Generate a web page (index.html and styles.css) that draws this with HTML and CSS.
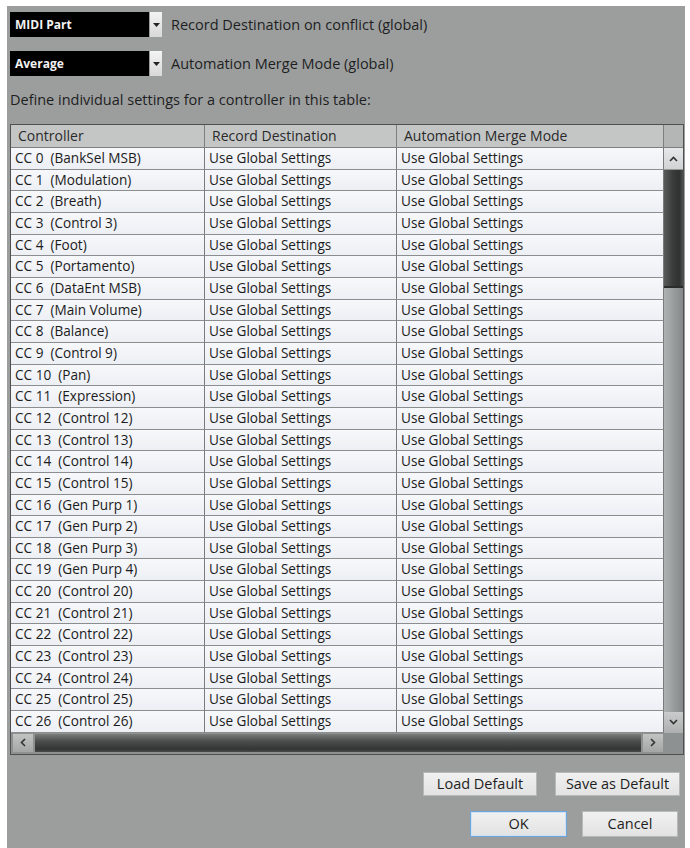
FILE: index.html
```html
<!DOCTYPE html>
<html>
<head>
<meta charset="utf-8">
<link rel="stylesheet" href="styles.css">
</head>
<body>
<div class="dialog">
  <div class="opt-row">
    <div class="combo"><span class="combo-box">MIDI Part</span><span class="combo-btn"><svg width="7" height="4" viewBox="0 0 7 4"><path d="M0 0H7L3.5 4Z" fill="#222"/></svg></span></div>
    <span class="opt-label">Record Destination on conflict (global)</span>
  </div>
  <div class="opt-row">
    <div class="combo"><span class="combo-box">Average</span><span class="combo-btn"><svg width="7" height="4" viewBox="0 0 7 4"><path d="M0 0H7L3.5 4Z" fill="#222"/></svg></span></div>
    <span class="opt-label">Automation Merge Mode (global)</span>
  </div>
  <p class="intro">Define individual settings for a controller in this table:</p>

  <div class="table">
    <div class="hd">Controller</div>
    <div class="hd">Record Destination</div>
    <div class="hd">Automation Merge Mode</div>
    <div class="hd corner"></div>

    <div class="vscroll">
      <div class="sbtn up"><svg width="9" height="6" viewBox="0 0 9 6"><path d="M1 5L4.5 1.5L8 5" fill="none" stroke="#333" stroke-width="1.6"/></svg></div>
      <div class="vthumb"></div>
      <div class="vtrack"></div>
      <div class="sbtn down"><svg width="9" height="6" viewBox="0 0 9 6"><path d="M1 1L4.5 4.5L8 1" fill="none" stroke="#333" stroke-width="1.6"/></svg></div>
    </div>

    <div class="c">CC 0&nbsp; (BankSel MSB)</div><div class="c">Use Global Settings</div><div class="c">Use Global Settings</div>
    <div class="c">CC 1&nbsp; (Modulation)</div><div class="c">Use Global Settings</div><div class="c">Use Global Settings</div>
    <div class="c">CC 2&nbsp; (Breath)</div><div class="c">Use Global Settings</div><div class="c">Use Global Settings</div>
    <div class="c">CC 3&nbsp; (Control 3)</div><div class="c">Use Global Settings</div><div class="c">Use Global Settings</div>
    <div class="c">CC 4&nbsp; (Foot)</div><div class="c">Use Global Settings</div><div class="c">Use Global Settings</div>
    <div class="c">CC 5&nbsp; (Portamento)</div><div class="c">Use Global Settings</div><div class="c">Use Global Settings</div>
    <div class="c">CC 6&nbsp; (DataEnt MSB)</div><div class="c">Use Global Settings</div><div class="c">Use Global Settings</div>
    <div class="c">CC 7&nbsp; (Main Volume)</div><div class="c">Use Global Settings</div><div class="c">Use Global Settings</div>
    <div class="c">CC 8&nbsp; (Balance)</div><div class="c">Use Global Settings</div><div class="c">Use Global Settings</div>
    <div class="c">CC 9&nbsp; (Control 9)</div><div class="c">Use Global Settings</div><div class="c">Use Global Settings</div>
    <div class="c">CC 10&nbsp; (Pan)</div><div class="c">Use Global Settings</div><div class="c">Use Global Settings</div>
    <div class="c">CC 11&nbsp; (Expression)</div><div class="c">Use Global Settings</div><div class="c">Use Global Settings</div>
    <div class="c">CC 12&nbsp; (Control 12)</div><div class="c">Use Global Settings</div><div class="c">Use Global Settings</div>
    <div class="c">CC 13&nbsp; (Control 13)</div><div class="c">Use Global Settings</div><div class="c">Use Global Settings</div>
    <div class="c">CC 14&nbsp; (Control 14)</div><div class="c">Use Global Settings</div><div class="c">Use Global Settings</div>
    <div class="c">CC 15&nbsp; (Control 15)</div><div class="c">Use Global Settings</div><div class="c">Use Global Settings</div>
    <div class="c">CC 16&nbsp; (Gen Purp 1)</div><div class="c">Use Global Settings</div><div class="c">Use Global Settings</div>
    <div class="c">CC 17&nbsp; (Gen Purp 2)</div><div class="c">Use Global Settings</div><div class="c">Use Global Settings</div>
    <div class="c">CC 18&nbsp; (Gen Purp 3)</div><div class="c">Use Global Settings</div><div class="c">Use Global Settings</div>
    <div class="c">CC 19&nbsp; (Gen Purp 4)</div><div class="c">Use Global Settings</div><div class="c">Use Global Settings</div>
    <div class="c">CC 20&nbsp; (Control 20)</div><div class="c">Use Global Settings</div><div class="c">Use Global Settings</div>
    <div class="c">CC 21&nbsp; (Control 21)</div><div class="c">Use Global Settings</div><div class="c">Use Global Settings</div>
    <div class="c">CC 22&nbsp; (Control 22)</div><div class="c">Use Global Settings</div><div class="c">Use Global Settings</div>
    <div class="c">CC 23&nbsp; (Control 23)</div><div class="c">Use Global Settings</div><div class="c">Use Global Settings</div>
    <div class="c">CC 24&nbsp; (Control 24)</div><div class="c">Use Global Settings</div><div class="c">Use Global Settings</div>
    <div class="c">CC 25&nbsp; (Control 25)</div><div class="c">Use Global Settings</div><div class="c">Use Global Settings</div>
    <div class="c">CC 26&nbsp; (Control 26)</div><div class="c">Use Global Settings</div><div class="c">Use Global Settings</div>

    <div class="hscroll">
      <div class="sbtn left"><svg width="6" height="9" viewBox="0 0 6 9"><path d="M5 1L1.5 4.5L5 8" fill="none" stroke="#333" stroke-width="1.6"/></svg></div>
      <div class="hthumb"></div>
      <div class="sbtn right"><svg width="6" height="9" viewBox="0 0 6 9"><path d="M1 1L4.5 4.5L1 8" fill="none" stroke="#333" stroke-width="1.6"/></svg></div>
    </div>
    <div class="scorner"></div>
  </div>

  <div class="btn-row first">
    <button class="btn w-load">Load Default</button>
    <button class="btn w-save">Save as Default</button>
  </div>
  <div class="btn-row second">
    <button class="btn w-ok default">OK</button>
    <button class="btn w-cancel">Cancel</button>
  </div>
</div>
</body>
</html>
```

FILE: styles.css
```css
html, body {
  margin: 0;
  padding: 0;
  background: #ffffff;
}
body {
  font-family: "Open Sans", "Noto Sans", sans-serif;
  color: #1c1c1c;
}
.dialog {
  margin: 6px 0 0 7px;
  width: 678px;
  height: 842px;
  background: #9c9e9e;
  padding: 6px 0 0 3px;
  box-sizing: border-box;
}
.opt-row {
  display: flex;
  align-items: center;
  height: 25px;
  margin-bottom: 14px;
}
.combo {
  display: flex;
  height: 25px;
}
.combo-box {
  width: 139px;
  background: #000;
  color: #f2f2f2;
  font-size: 12px;
  font-weight: 700;
  line-height: 25px;
  padding-left: 5px;
  box-sizing: border-box;
}
.combo-btn {
  width: 12px;
  margin-left: 1px;
  background: linear-gradient(#f4f4f4, #d8d8d8);
  display: flex;
  align-items: center;
  justify-content: center;
}
.opt-label {
  margin-left: 9px;
  font-size: 14.5px;
  color: #1e1e1e;
}
.intro {
  margin: 0;
  padding-top: 0;
  height: 34px;
  box-sizing: border-box;
  font-size: 14.5px;
  line-height: 20px;
  color: #1e1e1e;
}
.table {
  width: 674px;
  height: 631px;
  border: 1px solid #4e5050;
  box-sizing: border-box;
  display: grid;
  grid-template-columns: 194px 192px 267px 19px;
  grid-template-rows: 23px repeat(27, 21.67px) 21px;
  background: #f1f3f7;
}
.hd {
  background: #c4c6c6;
  border-right: 1px solid #7d7f7f;
  border-bottom: 1px solid #7d7f7f;
  font-size: 14px;
  line-height: 22px;
  padding-left: 7px;
  color: #2a2a2a;
  white-space: nowrap;
  overflow: hidden;
}
.hd.corner {
  border-right: none;
  padding: 0;
  background: #b4b6b6;
}
.c {
  background: linear-gradient(#f7f8fb, #eceff4);
  border-right: 1px solid #7a7c7c;
  border-bottom: 1px solid #8b8d8f;
  font-size: 13.6px;
  line-height: 20px;
  padding-left: 4px;
  white-space: nowrap;
  overflow: hidden;
  color: #1c1c1c;
}
.vscroll {
  grid-column: 4;
  grid-row: 2 / 29;
  display: flex;
  flex-direction: column;
  background: #959898;
}
.sbtn {
  display: flex;
  align-items: center;
  justify-content: center;
  background: linear-gradient(#c9cbcc, #aeb0b0);
}
.sbtn.up, .sbtn.down {
  height: 21px;
}
.sbtn.up {
  background: linear-gradient(#e6e8ea, #d0d2d4);
}
.vthumb {
  height: 116px;
  margin: 1px 0 0 0;
  background: linear-gradient(90deg, #5a5c5c, #3b3d3d 45%, #2f3131 80%, #505252);
  border-bottom: 2px solid #2a2c2c;
}
.vtrack {
  flex: 1;
  background: linear-gradient(90deg, #b0b3b3, #9a9d9d 50%, #868989);
}
.hscroll {
  grid-column: 1 / 4;
  grid-row: 29;
  display: flex;
  background: #8e9191;
  padding: 1px 1px 2px 2px;
}
.sbtn.left, .sbtn.right {
  width: 20px;
  background: linear-gradient(#c2c4c4, #a4a6a6);
}
.hthumb {
  flex: 1;
  margin: 0 2px;
  background: linear-gradient(#7a7c7c, #4c4e4e 40%, #333535 85%, #4a4c4c);
}
.scorner {
  grid-column: 4;
  grid-row: 29;
  background: #8e9191;
}
.btn-row {
  display: flex;
  justify-content: flex-end;
}
.btn-row.first {
  margin-top: 17px;
  padding-right: 5px;
  gap: 18px;
}
.btn-row.second {
  margin-top: 15px;
  padding-right: 7px;
  gap: 15px;
}
.btn {
  font-family: "Open Sans", "Noto Sans", sans-serif;
  font-size: 14.5px;
  color: #1e1e1e;
  background: linear-gradient(#f1f1f1, #e2e2e2);
  border: 1px solid #b8b8b8;
  border-radius: 0;
  padding: 0;
  height: 24px;
  line-height: 20px;
}
.btn-row.second .btn {
  height: 26px;
}
.btn.default {
  border: 1px solid #6ea6dc;
  box-shadow: inset 0 0 0 1px #cde2f6;
}
.w-load { width: 114px; }
.w-save { width: 125px; }
.w-ok { width: 97px; }
.w-cancel { width: 96px; }
```
